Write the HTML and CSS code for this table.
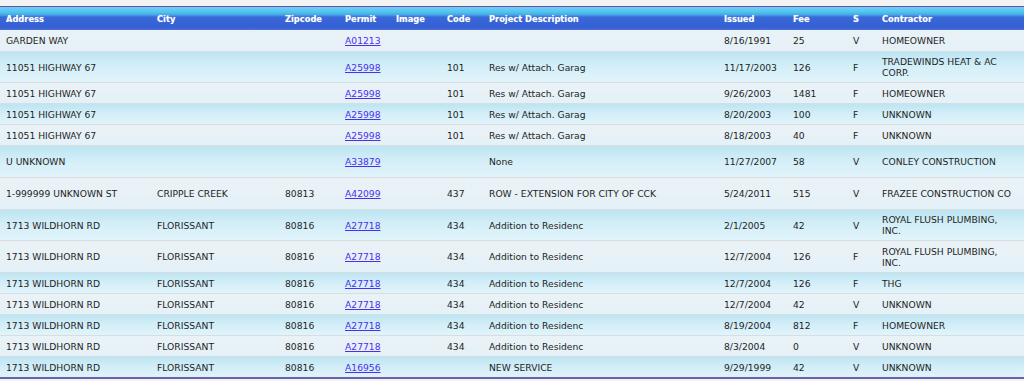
FILE: index.html
```html
<!DOCTYPE html>
<html>
<head>
<meta charset="utf-8">
<link rel="stylesheet" href="styles.css">
</head>
<body>
<table class="grid">
  <colgroup>
    <col class="c-addr"><col class="c-city"><col class="c-zip"><col class="c-permit"><col class="c-image"><col class="c-code"><col class="c-desc"><col class="c-issued"><col class="c-fee"><col class="c-s"><col class="c-contr">
  </colgroup>
  <thead>
    <tr><th>Address</th><th>City</th><th>Zipcode</th><th>Permit</th><th>Image</th><th>Code</th><th>Project Description</th><th>Issued</th><th>Fee</th><th>S</th><th>Contractor</th></tr>
  </thead>
  <tbody>
    <tr class="odd h21"><td>GARDEN WAY</td><td></td><td></td><td><a href="#">A01213</a></td><td></td><td></td><td></td><td>8/16/1991</td><td>25</td><td>V</td><td>HOMEOWNER</td></tr>
    <tr class="even h31"><td>11051 HIGHWAY 67</td><td></td><td></td><td><a href="#">A25998</a></td><td></td><td>101</td><td>Res w/ Attach. Garag</td><td>11/17/2003</td><td>126</td><td>F</td><td>TRADEWINDS HEAT &amp; AC CORP.</td></tr>
    <tr class="odd h21"><td>11051 HIGHWAY 67</td><td></td><td></td><td><a href="#">A25998</a></td><td></td><td>101</td><td>Res w/ Attach. Garag</td><td>9/26/2003</td><td>1481</td><td>F</td><td>HOMEOWNER</td></tr>
    <tr class="even h21"><td>11051 HIGHWAY 67</td><td></td><td></td><td><a href="#">A25998</a></td><td></td><td>101</td><td>Res w/ Attach. Garag</td><td>8/20/2003</td><td>100</td><td>F</td><td>UNKNOWN</td></tr>
    <tr class="odd h21"><td>11051 HIGHWAY 67</td><td></td><td></td><td><a href="#">A25998</a></td><td></td><td>101</td><td>Res w/ Attach. Garag</td><td>8/18/2003</td><td>40</td><td>F</td><td>UNKNOWN</td></tr>
    <tr class="even h32"><td>U UNKNOWN</td><td></td><td></td><td><a href="#">A33879</a></td><td></td><td></td><td>None</td><td>11/27/2007</td><td>58</td><td>V</td><td>CONLEY CONSTRUCTION</td></tr>
    <tr class="odd h32"><td>1-999999 UNKNOWN ST</td><td>CRIPPLE CREEK</td><td>80813</td><td><a href="#">A42099</a></td><td></td><td>437</td><td>ROW - EXTENSION FOR CITY OF CCK</td><td>5/24/2011</td><td>515</td><td>V</td><td>FRAZEE CONSTRUCTION CO</td></tr>
    <tr class="even h31"><td>1713 WILDHORN RD</td><td>FLORISSANT</td><td>80816</td><td><a href="#">A27718</a></td><td></td><td>434</td><td>Addition to Residenc</td><td>2/1/2005</td><td>42</td><td>V</td><td>ROYAL FLUSH PLUMBING, INC.</td></tr>
    <tr class="odd h32"><td>1713 WILDHORN RD</td><td>FLORISSANT</td><td>80816</td><td><a href="#">A27718</a></td><td></td><td>434</td><td>Addition to Residenc</td><td>12/7/2004</td><td>126</td><td>F</td><td>ROYAL FLUSH PLUMBING, INC.</td></tr>
    <tr class="even h21"><td>1713 WILDHORN RD</td><td>FLORISSANT</td><td>80816</td><td><a href="#">A27718</a></td><td></td><td>434</td><td>Addition to Residenc</td><td>12/7/2004</td><td>126</td><td>F</td><td>THG</td></tr>
    <tr class="odd h21"><td>1713 WILDHORN RD</td><td>FLORISSANT</td><td>80816</td><td><a href="#">A27718</a></td><td></td><td>434</td><td>Addition to Residenc</td><td>12/7/2004</td><td>42</td><td>V</td><td>UNKNOWN</td></tr>
    <tr class="even h21"><td>1713 WILDHORN RD</td><td>FLORISSANT</td><td>80816</td><td><a href="#">A27718</a></td><td></td><td>434</td><td>Addition to Residenc</td><td>8/19/2004</td><td>812</td><td>F</td><td>HOMEOWNER</td></tr>
    <tr class="odd h21"><td>1713 WILDHORN RD</td><td>FLORISSANT</td><td>80816</td><td><a href="#">A27718</a></td><td></td><td>434</td><td>Addition to Residenc</td><td>8/3/2004</td><td>0</td><td>V</td><td>UNKNOWN</td></tr>
    <tr class="even h21 last"><td>1713 WILDHORN RD</td><td>FLORISSANT</td><td>80816</td><td><a href="#">A16956</a></td><td></td><td></td><td>NEW SERVICE</td><td>9/29/1999</td><td>42</td><td>V</td><td>UNKNOWN</td></tr>
  </tbody>
</table>
</body>
</html>
```

FILE: styles.css
```css
html, body {
  margin: 0;
  padding: 0;
  background: #f3f3f3;
}
body {
  padding-top: 6px;
  font-family: "DejaVu Sans", Verdana, sans-serif;
  font-size: 9.2px;
  color: #1e1e1e;
}
.grid {
  width: 1024px;
  border-collapse: collapse;
  table-layout: fixed;
  border-bottom: 2px solid #6a62b0;
}
.c-addr { width: 151px; }
.c-city { width: 128px; }
.c-zip { width: 60px; }
.c-permit { width: 51px; }
.c-image { width: 51px; }
.c-code { width: 42px; }
.c-desc { width: 235px; }
.c-issued { width: 69px; }
.c-fee { width: 60px; }
.c-s { width: 29px; }
.c-contr { width: 148px; }

.grid thead tr {
  background: linear-gradient(to bottom, #6fd0f4 0px, #52c4ef 5px, #44a4e6 8px, #3a6ad8 10px, #3560d4 18px, #3a63d6 22px, #5a7ee0 23px);
}
.grid th {
  height: 23px;
  padding: 0 0 0 6px;
  border-top: 1px solid #6a4fa6;
  text-align: left;
  font-weight: bold;
  color: #ffffff;
  font-size: 8.3px;
  text-shadow: 0 0 1px rgba(255,255,255,0.4);
  vertical-align: middle;
}
.grid td {
  padding: 0 6px 0 6px;
  line-height: 11px;
  vertical-align: middle;
  border-top: 1px solid #d7dde1;
  white-space: nowrap;
}
.grid td:last-child {
  white-space: normal;
  padding-right: 12px;
}
.h21 td { height: 20px; }
.h31 td { height: 30px; }
.h32 td { height: 31px; }
.grid tbody tr:first-child td { border-top: none; height: 21px; }

.odd {
  background: linear-gradient(to bottom, #eaf2f6 0%, #e4f1f8 100%);
}
.even {
  background: linear-gradient(to bottom, #bde5f2 0%, #d3eef8 45%, #e2f4fb 100%);
}
.grid a {
  color: #4b2ef0;
  text-decoration: underline;
}
```
